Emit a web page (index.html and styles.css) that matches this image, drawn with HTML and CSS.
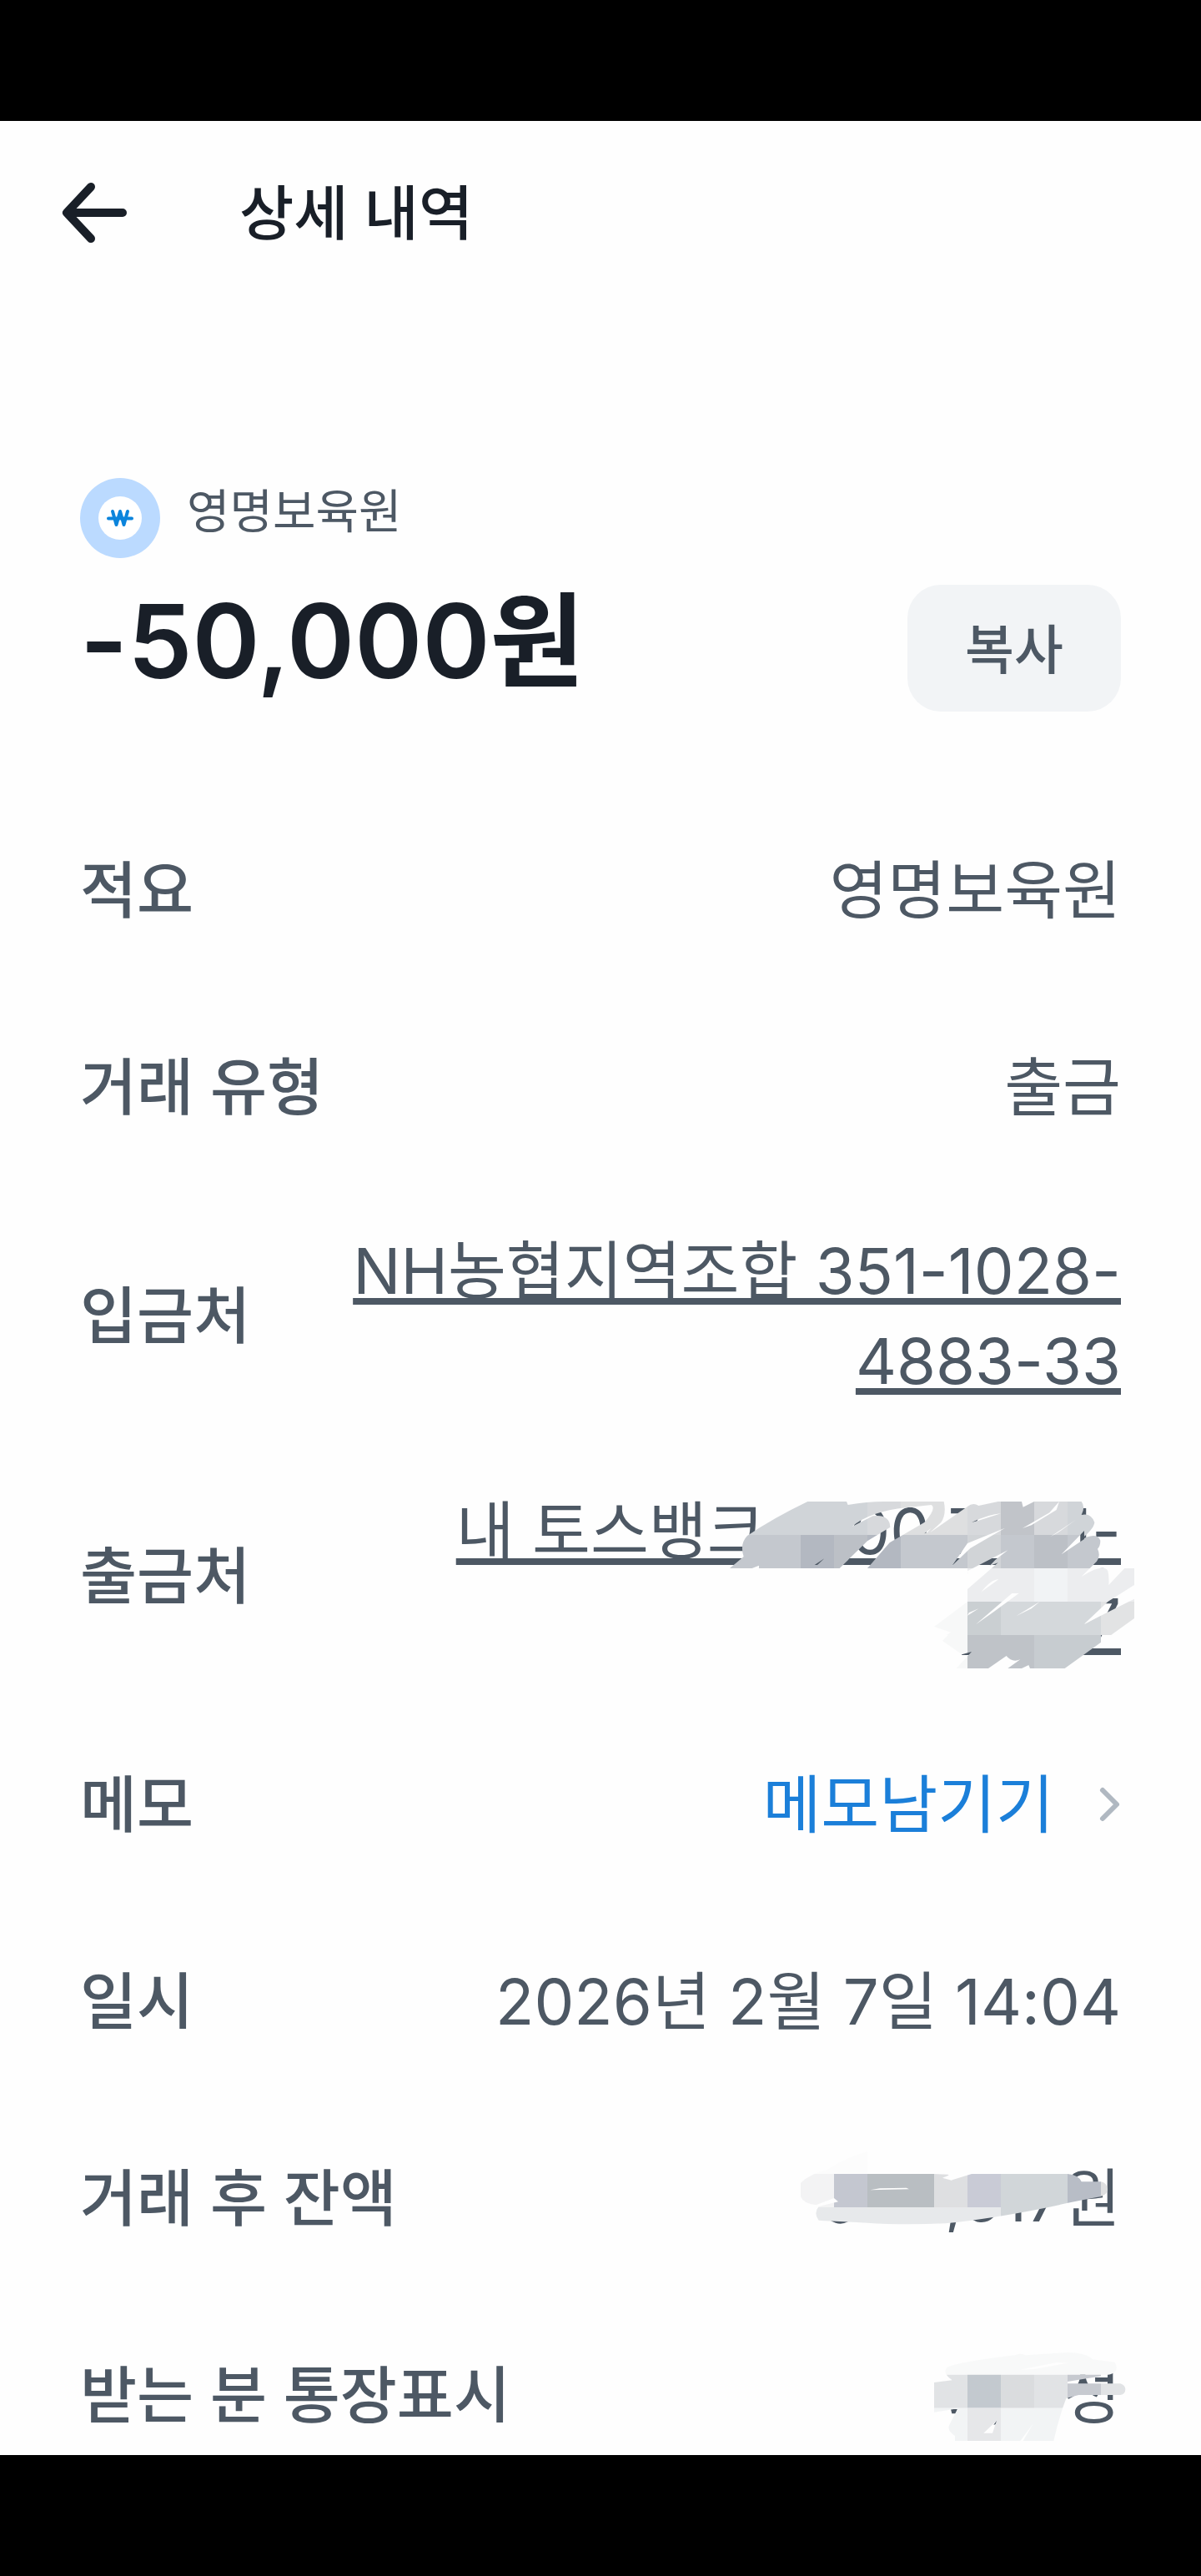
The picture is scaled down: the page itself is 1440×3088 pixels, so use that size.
FILE: index.html
```html
<!doctype html>
<html lang="ko">
  <head>
    <meta charset="UTF-8" />
    <meta name="viewport" content="width=device-width, initial-scale=1.0" />
    <title>상세 내역</title>
    <link rel="stylesheet" href="styles.css">
  </head>
  <body>
    <div class="system-bar"></div>

    <main class="screen">
      <header class="top-bar">
        <button class="back-button" aria-label="뒤로">
          <svg width="80" height="76" viewBox="0 0 80 76" fill="none" stroke="currentColor" stroke-width="10" stroke-linecap="round" stroke-linejoin="round">
            <path d="M36 7L7 38l29 31M9 38h65" />
          </svg>
        </button>
        <h1>상세 내역</h1>
      </header>

      <!-- Who and how much -->
      <section class="summary">
        <div>
          <div class="payee">
            <svg width="96" height="96" viewBox="0 0 96 96" fill="none">
              <circle cx="48" cy="48" r="48" fill="#bbdaff" />
              <circle cx="48" cy="48" r="26" fill="#fff" />
              <path d="M39 40l4.500 16L48 40l4.500 16L57 40M34 48.500h28" stroke="#0b84dc" stroke-width="4" stroke-linecap="round" stroke-linejoin="round" />
            </svg>
            <span>영명보육원</span>
          </div>
          <p class="amount">-50,000원</p>
        </div>
        <button class="copy-button">복사</button>
      </section>

      <!-- Transaction details -->
      <dl class="details">
        <div class="row">
          <dt>적요</dt>
          <dd>영명보육원</dd>
        </div>
        <div class="row">
          <dt>거래 유형</dt>
          <dd>출금</dd>
        </div>
        <div class="row">
          <dt>입금처</dt>
          <dd><a class="account" href="#">NH농협지역조합 351-1028-4883-33</a></dd>
        </div>
        <div class="row">
          <dt>출금처</dt>
          <dd>
            <a class="account" href="#">내 토스뱅크 1&numsp;00&nbsp;7&numsp;&numsp;1-<br>&numsp;&numsp;&numsp;7</a>
            <svg class="scribble scribble-account" width="520" height="260" viewBox="0 0 1560 780" aria-hidden="true">
              <mask id="accountMask">
                <path fill="#fff" d="M45 360L95 318Q80 272 108 243Q200 180 325 120H465L470 132Q540 120 600 120H815Q825 165 805 195L765 232L900 138Q920 122 940 135L1010 120H1310Q1325 140 1310 168Q1345 160 1357 195Q1355 220 1300 262Q1365 225 1378 260Q1378 280 1368 290Q1380 315 1365 335L1310 390Q1390 340 1405 370Q1410 390 1408 420L1470 355Q1490 345 1500 355V420L1405 480L1320 560L1500 470V540L1250 720H780V630L840 590L780 570L900 480V435L1010 340L900 380V360Z" />
                <path fill="#000" d="M780 360V600H830L780 650V360ZM485 210Q550 155 680 142L770 132Q790 145 745 195L620 268L540 360H440L540 262L622 212Q620 165 560 172Z" />
                <path fill="#000" d="M755 232L770 215L745 235ZM915 195Q980 165 1020 163L945 187ZM1098 216L1195 160L1230 120L1220 150L1130 205ZM1198 247L1290 185L1225 232ZM1238 310L1320 225V255ZM900 270L1035 215L910 288L845 350ZM900 370L1045 295L1000 330L905 430ZM1095 120H1140L1100 140Z" />
                <path fill="#000" d="M950 445Q985 400 1012 400ZM930 562L1060 450L1085 450L990 520ZM1075 532L1160 480L1130 505ZM1320 562L1440 465L1445 490L1405 515ZM900 530L940 505L905 520ZM780 600L700 720H860L915 660L880 670ZM975 720L1040 675Q1060 700 1090 688L1045 720ZM1095 720L1120 708L1125 720ZM125 360L150 350V360ZM350 348L385 325L360 348Z" />
              </mask>
              <g mask="url(#accountMask)">
                <path fill="#d0d4d8" d="M0 120h1400v120H0z" />
                <path fill="#c4c8ce" d="M0 240h1400v120H0z" />
                <path fill="#d7d9dc" d="M540 120h120v120H540zM900 120h120v120H900zM1140 120h120v120h-120z" />
                <path fill="#dedfe0" d="M660 120h240v120H660z" />
                <path fill="#c1c4c9" d="M1020 120h120v120h-120z" />
                <path fill="#b3b8c1" d="M300 240h120v120H300zM540 240h120v120H540z" />
                <path fill="#bcc0c6" d="M420 240h120v120H420zM1140 240h120v120h-120z" />
                <path fill="#d1d4d7" d="M900 240h120v120H900z" />
                <path fill="#ecedef" d="M780 360h780v120H780z" />
                <path fill="#f1f3f5" d="M1140 360h120v120h-120z" />
                <path fill="#f7f8f8" d="M780 480h120v240H780z" />
                <path fill="#d4d8db" d="M900 480h480v120H900z" />
                <path fill="#cacfd2" d="M900 480h120v120H900z" />
                <path fill="#e2e3e4" d="M1380 480h120v120h-120z" />
                <path fill="#bfc3c8" d="M900 600h240v120H900z" />
                <path fill="#c7ccd0" d="M1140 600h240v120h-240z" />
              </g>
            </svg>
          </dd>
        </div>
        <div class="row">
          <dt>메모</dt>
          <dd>
            <a class="memo-link" href="#">
              메모남기기
              <svg width="28" height="44" viewBox="0 0 28 44" fill="none" stroke="#b0b8c1" stroke-width="6" stroke-linecap="round" stroke-linejoin="round">
                <path d="M6 5l17 17L6 39" />
              </svg>
            </a>
          </dd>
        </div>
        <div class="row">
          <dt>일시</dt>
          <dd>2026년 2월 7일 14:04</dd>
        </div>
        <div class="row">
          <dt>거래 후 잔액</dt>
          <dd>
            &numsp;&numsp;&numsp;,617원
            <svg class="scribble scribble-balance" width="460" height="130" viewBox="0 0 1380 390" aria-hidden="true">
              <path fill="#4d5864" d="M228 276Q260 296 290 280V270H228z" />
              <mask id="balanceMask">
                <path fill="#fff" d="M120 140Q150 110 220 90Q290 45 360 28V108H600L650 110L665 130L735 108H1080Q1120 112 1130 136H1200Q1222 140 1224 165Q1220 190 1180 193Q1100 208 1000 230Q800 270 640 286Q480 292 360 284Q240 278 185 275Q165 250 185 225L255 208L240 195L175 220Q130 215 120 190Z" />
                <path fill="#000" d="M370 166L405 160L500 158L510 163ZM630 122L660 110L665 132Z" />
              </mask>
              <g mask="url(#balanceMask)">
                <path fill="#fcfcfc" d="M120 0h240v108H120z" />
                <path fill="#f3f3f4" d="M120 108h120v120H120z" />
                <path fill="#c4c7d0" d="M240 108h120v120H240z" />
                <path fill="#b9bec2" d="M360 108h240v120H360z" />
                <path fill="#dedfe1" d="M600 108h120v120H600z" />
                <path fill="#c9cbd6" d="M720 108h120v120H720z" />
                <path fill="#d1d6d9" d="M840 108h240v180H840z" />
                <path fill="#b8bdc6" d="M1080 108h120v120h-120z" />
                <path fill="#dedfe0" d="M1200 108h60v120h-60z" />
                <path fill="#e7e9eb" d="M120 228h720v70H120z" />
              </g>
            </svg>
          </dd>
        </div>
        <div class="row">
          <dt>받는 분 통장표시</dt>
          <dd>
            성
            <svg class="scribble scribble-name" width="320" height="160" viewBox="0 0 960 480" aria-hidden="true">
              <path fill="#4d5864" d="M180 264h24l-6 16h-14zM334 320l12-16-2 14z" />
              <mask id="nameMask">
                <path fill="#fff" d="M120 168L185 160Q150 135 165 115Q200 95 410 70Q430 60 450 70L600 60Q670 62 690 85L770 95Q790 130 750 140L600 165L600 172H790Q808 178 808 193Q808 210 790 213H640L595 225Q570 290 550 378H440L475 318L430 378H195V360Q165 340 175 320L205 262L120 275Z" />
                <path fill="#000" d="M298 350L345 305L330 350ZM430 122L560 96L600 98L480 120Z" />
              </mask>
              <g mask="url(#nameMask)">
                <path fill="#f8f9f9" d="M120 40h720v100H120z" />
                <path fill="#e1e3e5" d="M120 140h120v120H120zM480 140h120v120H480zM720 160h120v60H720z" />
                <path fill="#c3c9cf" d="M240 140h120v120H240z" />
                <path fill="#dadcde" d="M360 140h120v120H360z" />
                <path fill="#c7cad0" d="M600 140h120v120H600z" />
                <path fill="#f2f4f5" d="M120 260h480v120H120z" />
                <path fill="#e6e7e9" d="M240 260h120v120H240z" />
              </g>
            </svg>
          </dd>
        </div>
      </dl>
    </main>

    <div class="system-bar"></div>
  </body>
</html>
```
FILE: styles.css
```css
* {
  box-sizing: border-box;
}

body {
  display: flex;
  flex-direction: column;
  height: 100vh;
  margin: 0;
  background: #fefefe;
  color: #4d5864;
  font-family: Inter, 'Noto Sans CJK KR', sans-serif;
  font-size: 76px;
  line-height: 108px;
}

button {
  padding: 0;
  border: none;
  font-family: inherit;
  cursor: pointer;
}

svg {
  display: block;
  flex: none;
}

.system-bar {
  flex: none;
  height: 145px;
  background: #000;
}

.screen {
  flex: 1;
  min-height: 0;
  overflow: hidden;
}

/* Top bar */
.top-bar {
  display: flex;
  align-items: center;
  gap: 134px;
  height: 220px;
  padding: 0 73px;
  color: #191f28;
}

.back-button {
  background: none;
  color: inherit;
}

h1 {
  margin: 0;
  font-size: 71px;
  font-weight: 500;
}

/* Summary */
.summary {
  display: flex;
  align-items: flex-end;
  justify-content: space-between;
  margin: 208px 96px 96px;
}

.payee {
  display: flex;
  gap: 32px;
  font-size: 56px;
  line-height: 80px;
}

.amount {
  margin: 16px 0 0;
  color: #191f28;
  font-size: 123px;
  font-weight: 600;
  line-height: 168px;
}

.copy-button {
  width: 256px;
  height: 152px;
  padding-bottom: 6px;
  border-radius: 40px;
  background: #f2f4f6;
  color: #4d5864;
  font-size: 64px;
  font-weight: 500;
}

/* Detail rows */
.details {
  margin: 0 96px;
}

.row {
  display: flex;
  align-items: center;
  justify-content: space-between;
  gap: 96px;
  min-height: 236px;
  padding: 48px 0;
}

dt {
  flex: none;
  font-size: 74px;
  font-weight: 500;
}

dd {
  position: relative;
  margin: 0;
  text-align: right;
  word-break: keep-all;
}

.account {
  color: inherit;
  text-decoration: underline;
  text-decoration-thickness: 8px;
  text-decoration-skip-ink: none;
  text-underline-offset: 5px;
}

.memo-link {
  display: flex;
  align-items: center;
  gap: 52px;
  color: #1b7fd9;
  text-decoration: none;
}

/* Scribbles that hide private values */
.scribble {
  position: absolute;
}

.scribble-account {
  top: -21px;
  right: -36px;
}

.scribble-balance {
  top: -11px;
  right: -36px;
}

.scribble-name {
  top: -17px;
  right: -56px;
}
```
